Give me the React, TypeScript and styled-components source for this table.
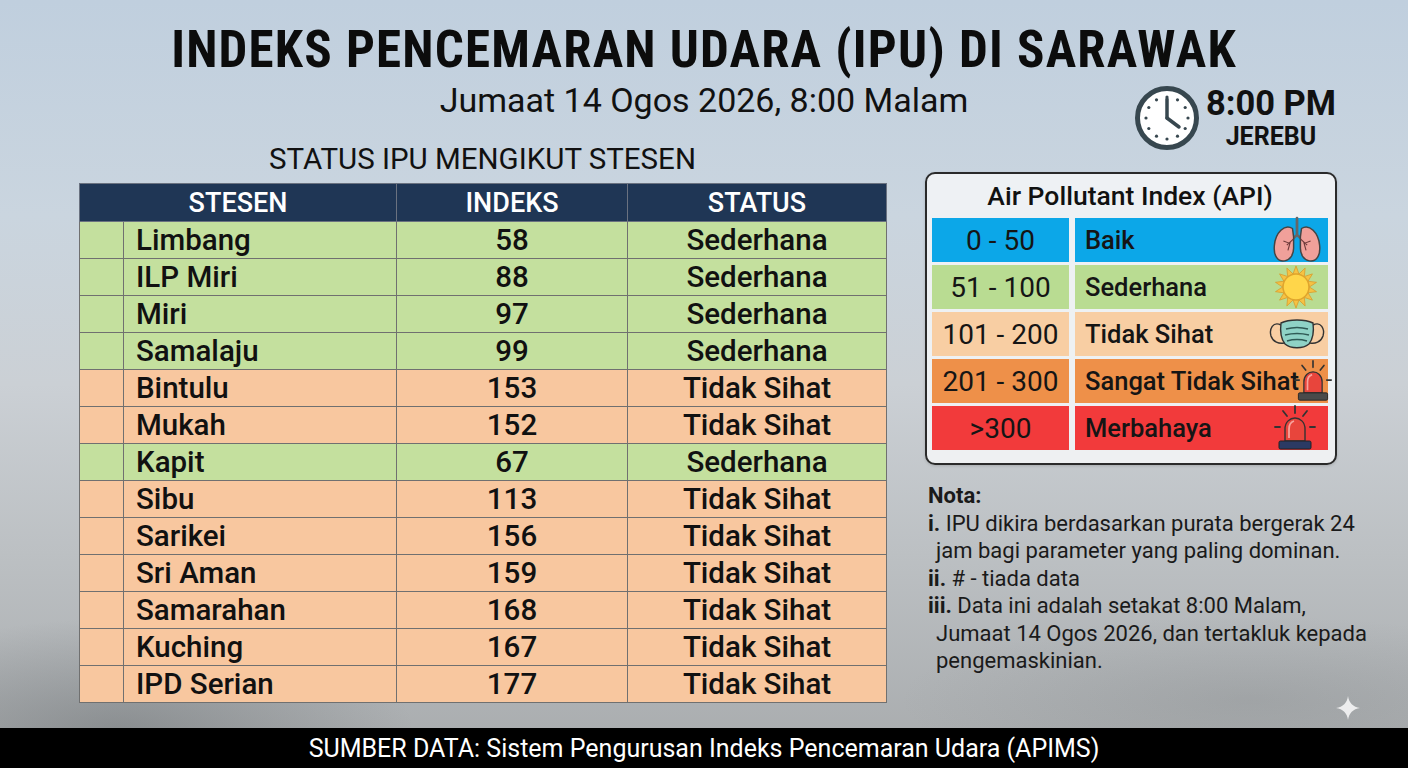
import React from 'react';
import styled, { createGlobalStyle } from 'styled-components';

const Global = createGlobalStyle`
  html, body { margin: 0; padding: 0; }
  body {
    width: 1408px; height: 768px; overflow: hidden;
    font-family: Roboto, "Liberation Sans", sans-serif;
    color: #111;
  }
`;

const Page = styled.div`
  position: relative;
  width: 1408px;
  height: 768px;
  display: flex;
  flex-direction: column;
  overflow: hidden;
  background:
    radial-gradient(ellipse 420px 160px at 120px 730px, rgba(85,90,93,0.38), rgba(85,90,93,0) 70%),
    radial-gradient(ellipse 500px 120px at 1250px 700px, rgba(120,124,126,0.25), rgba(120,124,126,0) 70%),
    linear-gradient(180deg, #c0cfde 0%, #cad5df 28%, #cbd0d5 50%, #bcc0c3 72%, #a7aaac 100%);
`;

const Title = styled.h1`
  margin: 0;
  padding-top: 22px;
  line-height: 56px;
  font-family: "Roboto Condensed", "Liberation Sans Narrow", Roboto, sans-serif;
  font-weight: 700;
  font-size: 51px;
  letter-spacing: 1.2px;
  text-align: center;
  color: #0c0c0c;
`;

const SubRow = styled.div`
  display: grid;
  grid-template-columns: 1fr auto 1fr;
  align-items: start;
  padding: 0 72px;
`;

const Subtitle = styled.div`
  grid-column: 2;
  font-size: 34px;
  line-height: 44px;
  font-weight: 400;
  color: #111;
`;

const ClockBlock = styled.div`
  grid-column: 3;
  justify-self: end;
  margin-top: 7px;
  display: flex;
  align-items: center;
  gap: 6px;
`;

const ClockText = styled.div`
  display: flex;
  flex-direction: column;
  align-items: center;
`;

const Time = styled.div`
  font-size: 34.5px;
  font-weight: 700;
  line-height: 34px;
`;

const Haze = styled.div`
  margin-top: 4px;
  font-size: 25px;
  font-weight: 700;
  line-height: 26px;
`;

const Main = styled.div`
  flex: 1;
  display: grid;
  grid-template-columns: 807px 412px;
  column-gap: 39px;
  padding: 0 0 0 79px;
  align-items: start;
`;

const LeftCol = styled.div`
  display: flex;
  flex-direction: column;
`;

const SectionHeading = styled.div`
  font-size: 29.5px;
  line-height: 16px;
  text-align: center;
  margin-bottom: 16px;
`;

const Table = styled.table`
  width: 807px;
  border-collapse: collapse;
  table-layout: fixed;
`;

const HeadCell = styled.th`
  background: #1f3655;
  color: #fff;
  font-weight: 500;
  font-size: 27px;
  height: 37px;
  padding: 0;
  border: 1px solid #6a7280;
`;

const Cell = styled.td<{ $tone: 'green' | 'orange'; $align?: 'left' | 'center' }>`
  background: ${(p) => (p.$tone === 'green' ? '#c4e09e' : '#f8c79f')};
  border: 1px solid #707070;
  height: 36px;
  padding: 0 ${(p) => (p.$align === 'left' ? '12px' : '0')};
  font-size: 29.5px;
  font-weight: 500;
  line-height: 36px;
  text-align: ${(p) => p.$align ?? 'center'};
  color: #111;
  white-space: nowrap;
`;

const RightCol = styled.div`
  display: flex;
  flex-direction: column;
  padding-top: 21px;
`;

const Legend = styled.div`
  border: 2px solid #2a2a2a;
  border-radius: 10px;
  background: rgba(241, 243, 245, 0.92);
  padding: 0 7px 13px 5px;
  display: flex;
  flex-direction: column;
  box-shadow: 0 1px 3px rgba(0,0,0,0.15);
`;

const LegendTitle = styled.div`
  font-size: 26.5px;
  font-weight: 500;
  line-height: 44px;
  text-align: center;
`;

const LegendRows = styled.div`
  display: flex;
  flex-direction: column;
  gap: 3px;
`;

const LegendRow = styled.div`
  display: grid;
  grid-template-columns: 137px 1fr;
  column-gap: 6px;
  height: 44px;
`;

const toneBg: Record<string, string> = {
  blue: '#0ca7e8',
  green: '#b9dc92',
  peach: '#f8cea3',
  orange: '#ee9049',
  red: '#f23a3b',
};

const RangeCell = styled.div<{ $tone: string }>`
  background: ${(p) => toneBg[p.$tone]};
  display: flex;
  align-items: center;
  justify-content: center;
  font-size: 28px;
  color: #151515;
`;

const LabelCell = styled.div<{ $tone: string }>`
  position: relative;
  background: ${(p) => toneBg[p.$tone]};
  display: flex;
  align-items: center;
  padding-left: 10px;
  font-size: 25.5px;
  font-weight: 500;
  color: #151515;
  white-space: nowrap;
`;

const IconWrap = styled.div<{ $right: number }>`
  position: absolute;
  right: ${(p) => p.$right}px;
  top: 50%;
  transform: translateY(-50%);
  display: flex;
  align-items: center;
  justify-content: center;
`;

const Notes = styled.div`
  margin-top: 17px;
  padding-left: 3px;
  font-size: 22px;
  line-height: 27.5px;
  color: #1a1a1a;
`;

const NoteHead = styled.div`
  font-weight: 700;
`;

const NoteLine = styled.div<{ $indent?: boolean }>`
  padding-left: ${(p) => (p.$indent ? '8px' : '0')};
  white-space: nowrap;
`;

const Num = styled.span`
  font-weight: 700;
`;

const Footer = styled.div`
  height: 40px;
  background: #000;
  color: #fff;
  display: flex;
  align-items: center;
  justify-content: center;
  font-size: 25px;
`;

const Sparkle = styled.svg`
  position: absolute;
  right: 48px;
  bottom: 48px;
  width: 24px;
  height: 24px;
`;

const Clock = () => (
  <svg width="66" height="66" viewBox="0 0 66 66">
    <circle cx="33" cy="33" r="29.5" fill="#fff" stroke="#37474f" strokeWidth="5" />
    {Array.from({ length: 12 }).map((_, i) => {
      const a = (i * Math.PI) / 6;
      const x = 33 + Math.sin(a) * 21;
      const y = 33 - Math.cos(a) * 21;
      return <circle key={i} cx={x} cy={y} r="1.6" fill="#37474f" />;
    })}
    <line x1="33" y1="33" x2="33" y2="14" stroke="#37474f" strokeWidth="3.5" strokeLinecap="round" />
    <line x1="33" y1="33" x2="45" y2="42" stroke="#37474f" strokeWidth="3.5" strokeLinecap="round" />
  </svg>
);

const Lungs = () => (
  <svg width="52" height="48" viewBox="0 0 46 46" preserveAspectRatio="none">
    <path d="M23 2 V18 M23 18 L17 24 M23 18 L29 24" stroke="#666" strokeWidth="2.4" fill="none" strokeLinecap="round" />
    <path d="M19 12 C12 7 4 16 3 28 C2 38 6 44 12 43 C17 42 20 37 20 31 V20 Z" fill="#f0a09a" stroke="#444" strokeWidth="1.3" />
    <path d="M27 12 C34 7 42 16 43 28 C44 38 40 44 34 43 C29 42 26 37 26 31 V20 Z" fill="#f0a09a" stroke="#444" strokeWidth="1.3" />
    <path d="M20 22 L14 28 M16 26 L11 24 M17 25 L15 33 M26 22 L32 28 M30 26 L35 24 M29 25 L31 33" stroke="#6e3a3a" strokeWidth="1" fill="none" />
  </svg>
);

const Sun = () => (
  <svg width="44" height="44" viewBox="0 0 46 46">
    {Array.from({ length: 14 }).map((_, i) => {
      const a = (i * 2 * Math.PI) / 14;
      const b = a + Math.PI / 14;
      const c = a - Math.PI / 14;
      const p = (ang: number, r: number) => `${23 + Math.sin(ang) * r},${23 - Math.cos(ang) * r}`;
      return <polygon key={i} points={`${p(c, 14)} ${p(a, 22)} ${p(b, 14)}`} fill="#f6c243" stroke="#d79a2a" strokeWidth="0.8" />;
    })}
    <circle cx="23" cy="23" r="13.5" fill="#ffd64a" stroke="#e0a52c" strokeWidth="1.4" />
  </svg>
);

const Mask = () => (
  <svg width="58" height="34" viewBox="0 0 58 34">
    <path d="M13 8 C5 4 1 12 3 19 C5 25 11 27 16 26" stroke="#333" strokeWidth="1.4" fill="none" />
    <path d="M45 8 C53 4 57 12 55 19 C53 25 47 27 42 26" stroke="#333" strokeWidth="1.4" fill="none" />
    <path d="M13 6 C21 2 37 2 45 6 C46 14 45 22 41 27 C35 32 23 32 17 27 C13 22 12 14 13 6 Z" fill="#8fd2c6" stroke="#333" strokeWidth="1.4" />
    <path d="M18 12 C25 10 33 10 40 12 M17 18 C25 16 33 16 41 18 M19 24 C26 22 32 22 39 24" stroke="#2f5a55" strokeWidth="1.5" fill="none" />
  </svg>
);

const Siren = ({ base, size }: { base: string; size: number }) => (
  <svg width={size} height={size} viewBox="0 0 46 46">
    <path d="M23 1 V8 M11 6 L15 11 M35 6 L31 11 M3 22 H8 M38 22 H43" stroke="#333" strokeWidth="1.8" strokeLinecap="round" />
    <path d="M13 36 V24 C13 17 18 13 23 13 C28 13 33 17 33 24 V36 Z" fill="#e8453c" stroke="#333" strokeWidth="1.4" />
    <path d="M17 33 V24 C17 20 19 17 22 16" stroke="#f7a49d" strokeWidth="1.8" fill="none" />
    <rect x="7" y="36" width="32" height="8" rx="1.5" fill={base} stroke="#222" strokeWidth="1" />
  </svg>
);

type Tone = 'green' | 'orange';
const stations: [string, number, string, Tone][] = [
  ['Limbang', 58, 'Sederhana', 'green'],
  ['ILP Miri', 88, 'Sederhana', 'green'],
  ['Miri', 97, 'Sederhana', 'green'],
  ['Samalaju', 99, 'Sederhana', 'green'],
  ['Bintulu', 153, 'Tidak Sihat', 'orange'],
  ['Mukah', 152, 'Tidak Sihat', 'orange'],
  ['Kapit', 67, 'Sederhana', 'green'],
  ['Sibu', 113, 'Tidak Sihat', 'orange'],
  ['Sarikei', 156, 'Tidak Sihat', 'orange'],
  ['Sri Aman', 159, 'Tidak Sihat', 'orange'],
  ['Samarahan', 168, 'Tidak Sihat', 'orange'],
  ['Kuching', 167, 'Tidak Sihat', 'orange'],
  ['IPD Serian', 177, 'Tidak Sihat', 'orange'],
];

const legend: [string, string, string, React.ReactNode, number][] = [
  ['0 - 50', 'Baik', 'blue', <Lungs />, 5],
  ['51 - 100', 'Sederhana', 'green', <Sun />, 10],
  ['101 - 200', 'Tidak Sihat', 'peach', <Mask />, 2],
  ['201 - 300', 'Sangat Tidak Sihat', 'orange', <Siren base="#4a4a4a" size={42} />, -6],
  ['>300', 'Merbahaya', 'red', <Siren base="#2b3a63" size={46} />, 10],
];

export default function App() {
  return (
    <Page>
      <Global />
      <Title>INDEKS PENCEMARAN UDARA (IPU) DI SARAWAK</Title>
      <SubRow>
        <Subtitle>Jumaat 14 Ogos 2026, 8:00 Malam</Subtitle>
        <ClockBlock>
          <Clock />
          <ClockText>
            <Time>8:00 PM</Time>
            <Haze>JEREBU</Haze>
          </ClockText>
        </ClockBlock>
      </SubRow>
      <Main>
        <LeftCol>
          <SectionHeading>STATUS IPU MENGIKUT STESEN</SectionHeading>
          <Table>
            <colgroup>
              <col style={{ width: 44 }} />
              <col style={{ width: 273 }} />
              <col style={{ width: 231 }} />
              <col style={{ width: 259 }} />
            </colgroup>
            <thead>
              <tr>
                <HeadCell colSpan={2}>STESEN</HeadCell>
                <HeadCell>INDEKS</HeadCell>
                <HeadCell>STATUS</HeadCell>
              </tr>
            </thead>
            <tbody>
              {stations.map(([name, idx, status, tone]) => (
                <tr key={name}>
                  <Cell $tone={tone} />
                  <Cell $tone={tone} $align="left">{name}</Cell>
                  <Cell $tone={tone}>{idx}</Cell>
                  <Cell $tone={tone}>{status}</Cell>
                </tr>
              ))}
            </tbody>
          </Table>
        </LeftCol>
        <RightCol>
          <Legend>
            <LegendTitle>Air Pollutant Index (API)</LegendTitle>
            <LegendRows>
              {legend.map(([range, label, tone, icon, right]) => (
                <LegendRow key={range}>
                  <RangeCell $tone={tone}>{range}</RangeCell>
                  <LabelCell $tone={tone}>
                    {label}
                    <IconWrap $right={right}>{icon}</IconWrap>
                  </LabelCell>
                </LegendRow>
              ))}
            </LegendRows>
          </Legend>
          <Notes>
            <NoteHead>Nota:</NoteHead>
            <NoteLine><Num>i.</Num> IPU dikira berdasarkan purata bergerak 24</NoteLine>
            <NoteLine $indent>jam bagi parameter yang paling dominan.</NoteLine>
            <NoteLine><Num>ii.</Num> # - tiada data</NoteLine>
            <NoteLine><Num>iii.</Num> Data ini adalah setakat 8:00 Malam,</NoteLine>
            <NoteLine $indent>Jumaat 14 Ogos 2026, dan tertakluk kepada</NoteLine>
            <NoteLine $indent>pengemaskinian.</NoteLine>
          </Notes>
        </RightCol>
      </Main>
      <Footer>SUMBER DATA: Sistem Pengurusan Indeks Pencemaran Udara (APIMS)</Footer>
      <Sparkle viewBox="0 0 24 24">
        <path d="M12 0 C13 7 17 11 24 12 C17 13 13 17 12 24 C11 17 7 13 0 12 C7 11 11 7 12 0 Z" fill="rgba(255,255,255,0.8)" />
      </Sparkle>
    </Page>
  );
}
